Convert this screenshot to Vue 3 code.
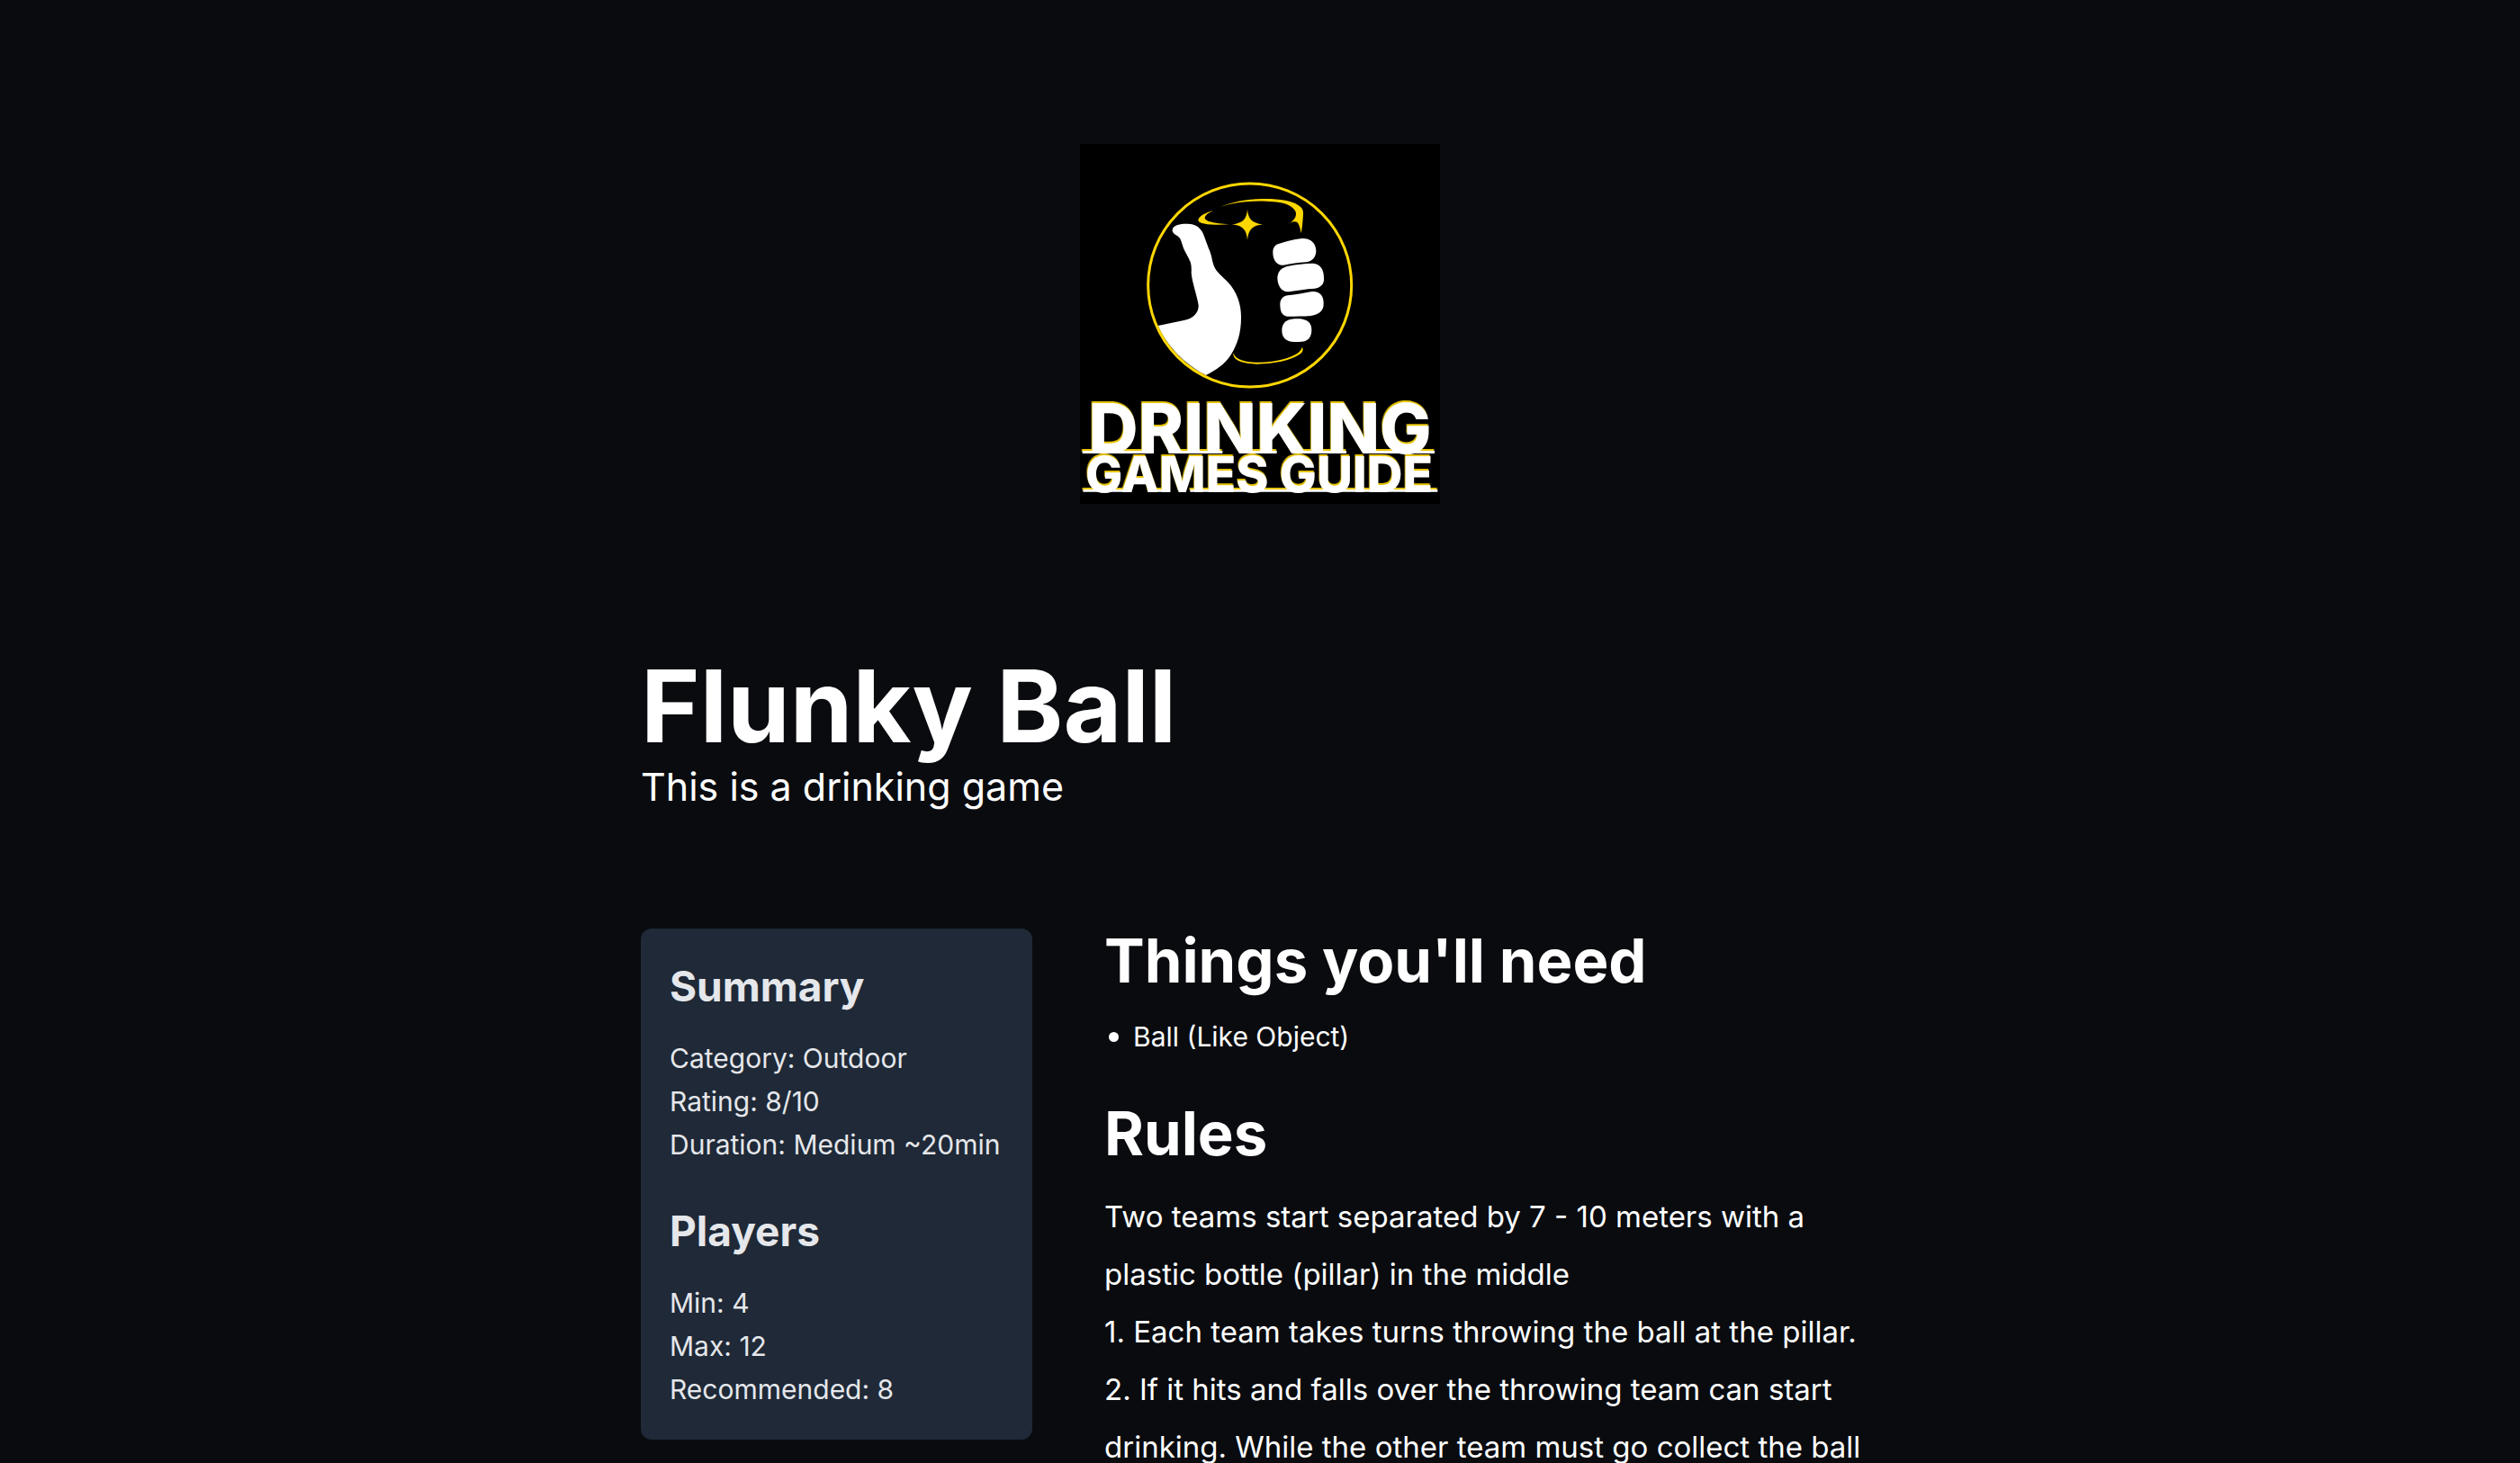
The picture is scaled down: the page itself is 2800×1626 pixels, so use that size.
<script setup>
const facts = [
  {
    title: 'Summary',
    lines: ['Category: Outdoor', 'Rating: 8/10', 'Duration: Medium ~20min'],
  },
  {
    title: 'Players',
    lines: ['Min: 4', 'Max: 12', 'Recommended: 8'],
  },
]

const supplies = ['Ball (Like Object)']

const rules = [
  'Two teams start separated by 7 - 10 meters with a plastic bottle (pillar) in the middle',
  '1. Each team takes turns throwing the ball at the pillar.',
  '2. If it hits and falls over the throwing team can start drinking. While the other team must go collect the ball',
]
</script>

<template>
  <div class="page">
    <header class="banner">
      <svg class="logo" viewBox="30 30 1200 1200" role="img" aria-label="Drinking Games Guide">
        <rect x="30" y="30" width="1200" height="1200" fill="#000" />
        <!-- hand -->
        <path
          fill="#fff"
          d="M338 316C340 303 356 296 385 296C415 295 430 308 440 328C447 345 452 362 463 388C470 408 470 420 477 438C484 456 505 472 522 490C552 522 567 562 567 608C567 660 555 695 535 730C512 768 480 785 450 801C380 765 320 705 290 636L380 617C410 611 426 590 425 568C420 535 404 495 401 460C402 445 401 432 398 424C390 403 376 385 372 368C368 356 366 346 360 341C350 332 337 330 338 316Z"
        />
        <path
          fill="#fff"
          d="M690 364C715 356 740 347 770 345C800 344 817 362 817 388C816 408 804 421 785 424C758 426 735 429 708 434C685 436 673 415 673 393C672 378 679 368 690 364Z
             M725 437C750 431 778 429 806 428C832 431 843 448 843 478C845 497 832 510 812 512C783 514 755 518 725 523C698 524 688 498 688 475C690 451 705 441 725 437Z
             M722 535C750 532 775 527 803 522C830 520 843 538 842 562C843 585 828 599 800 603C775 605 750 605 722 605C702 603 697 585 697 566C697 550 704 537 722 535Z
             M735 614C748 613 760 612 772 614C793 618 802 630 802 650C802 674 790 688 768 689C758 690 745 690 735 689C714 686 703 674 703 651C703 631 714 617 735 614Z"
        />
        <circle cx="596" cy="501" r="339" fill="none" stroke="#ffd700" stroke-width="9" />
        <!-- glass rim, sparkle and base -->
        <path
          fill="#ffd700"
          d="M497 240C535 224 590 212 645 213C700 213 738 220 757 234C770 243 774 248 774 262C773 285 771 308 767 328C764 310 760 297 754 291C746 286 735 290 722 297C738 289 750 278 750 263C750 249 735 237 712 229C670 218 590 218 540 229C524 232 510 236 497 240Z
             M475 251C455 261 446 269 446 277C447 287 470 295 528 298C475 301 424 298 424 284C425 271 445 260 475 251Z"
        />
        <path
          fill="#ffd700"
          d="M588 248C591 280 602 293 639 298C602 303 591 318 588 350C585 318 575 303 537 298C575 293 585 280 588 248Z"
        />
        <path
          fill="#ffd700"
          d="M541 727C546 742 560 750 585 755C625 762 675 757 710 747C745 737 768 723 770 707C776 716 773 724 760 733C730 752 680 763 620 764C575 763 538 753 541 727Z"
        />
        <g class="wordmark">
          <text x="630" y="1061" font-size="230">DRINKING</text>
          <path d="M38 1053H270V1062H38ZM325 1053H505V1062H325ZM580 1053H686V1062H580ZM745 1053H918V1062H745ZM990 1053H1212V1062H990Z" />
          <text x="627" y="1190" font-size="165">GAMES GUIDE</text>
          <path d="M40 1182H188V1190H40ZM255 1182H318V1190H255ZM397 1182H1222V1190H397Z" />
        </g>
      </svg>
    </header>

    <main class="content">
      <h1>Flunky Ball</h1>
      <p class="tagline">This is a drinking game</p>

      <div class="columns">
        <aside class="card">
          <section v-for="group in facts" :key="group.title">
            <h3>{{ group.title }}</h3>
            <p v-for="line in group.lines" :key="line">{{ line }}</p>
          </section>
        </aside>

        <article class="guide">
          <h2>Things you'll need</h2>
          <ul>
            <li v-for="item in supplies" :key="item">{{ item }}</li>
          </ul>
          <h2>Rules</h2>
          <p v-for="rule in rules" :key="rule">{{ rule }}</p>
        </article>
      </div>
    </main>
  </div>
</template>

<style>
body {
  margin: 0;
  background: #090b0f;
}
</style>

<style scoped>
.page {
  min-height: 100vh;
  background: #090b0f;
  color: #fff;
  font-family: Inter, "Liberation Sans", sans-serif;
  font-size: 30px;
  line-height: 48px;
}

h1,
h2,
h3,
p,
ul {
  margin: 0;
  padding: 0;
}

.banner {
  display: flex;
  justify-content: center;
  padding: 160px 0;
}

.logo {
  display: block;
  width: 400px;
  height: 400px;
}

.wordmark {
  fill: #fff;
  filter: drop-shadow(-2px -6px 0 #e6c200);
}

.wordmark text {
  font-family: Inter, "Liberation Sans", sans-serif;
  font-weight: 800;
  text-anchor: middle;
}

.content {
  box-sizing: border-box;
  max-width: 1376px;
  margin: 0 auto;
}

h1 {
  font-size: 112px;
  font-weight: 700;
  line-height: 128px;
}

.tagline {
  font-size: 43px;
  line-height: 52px;
}

.columns {
  display: flex;
  align-items: flex-start;
  gap: 80px;
  margin-top: 132px;
}

.card {
  box-sizing: border-box;
  display: flex;
  flex: 0 0 435px;
  flex-direction: column;
  gap: 40px;
  padding: 32px;
  border-radius: 12px;
  background: #1f2937;
  color: #e5e7eb;
}

.card h3 {
  margin-bottom: 24px;
  font-size: 46px;
  font-weight: 700;
  line-height: 64px;
}

.guide {
  flex: 1;
}

.guide h2 {
  font-size: 67px;
  font-weight: 700;
  line-height: 72px;
}

.guide ul {
  margin: 24px 0 48px;
  list-style: none;
}

.guide li {
  display: flex;
  align-items: center;
}

.guide li::before {
  content: "";
  width: 11px;
  height: 11px;
  margin: 0 16px 0 5px;
  border-radius: 50%;
  background: #fff;
}

.guide p {
  font-size: 33px;
  line-height: 64px;
}

.guide h2 + p {
  margin-top: 24px;
}
</style>
